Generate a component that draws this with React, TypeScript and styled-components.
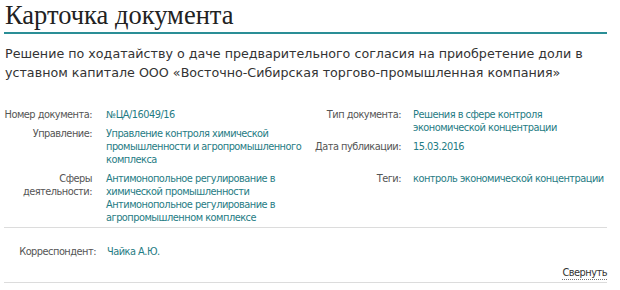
import React from "react";
import styled, { createGlobalStyle } from "styled-components";

const GlobalStyle = createGlobalStyle`
  html, body { margin: 0; padding: 0; background: #ffffff; }
  body { font-family: "DejaVu Sans", sans-serif; }
`;

const Card = styled.div`
  width: 603px;
  margin: 0 0 0 4px;
  display: flex;
  flex-direction: column;
`;

const Title = styled.h1`
  margin: 0;
  padding: 1px 0 3px 1px;
  font-family: "Liberation Serif", "Times New Roman", serif;
  font-weight: normal;
  font-size: 26.5px;
  line-height: 28px;
  color: #222222;
  border-bottom: 2px solid #2a8e96;
`;

const Subtitle = styled.p`
  margin: 10px 0 0 1px;
  font-family: "DejaVu Sans", sans-serif;
  font-size: 12.7px;
  line-height: 19px;
  color: #333333;
`;

const Fields = styled.div`
  margin-top: 26px;
  display: grid;
  grid-template-columns: 306px 1fr;
  row-gap: 6px;
`;

const Column = styled.div`
  display: flex;
  flex-direction: column;
  gap: 6px;
`;

const Field = styled.div<{ $label: number; $gap: number }>`
  display: grid;
  grid-template-columns: ${(p) => p.$label}px 1fr;
  column-gap: ${(p) => p.$gap}px;
  font-family: "DejaVu Sans", sans-serif;
  font-size: 9.8px;
  letter-spacing: -0.5px;
  line-height: 13px;
`;

const Label = styled.div`
  text-align: right;
  white-space: nowrap;
  color: #555555;
`;

const Value = styled.div<{ $width?: number }>`
  color: #1f7c84;
  ${(p) => (p.$width ? `max-width: ${p.$width}px;` : "")}
`;

const Correspondent = styled.div`
  margin-top: 3px;
  border-top: 1px solid #dcdcdc;
  padding-top: 17px;
`;

const Footer = styled.div`
  margin-top: 9px;
  padding-bottom: 2px;
  border-bottom: 1px solid #dcdcdc;
  display: flex;
  justify-content: flex-end;
`;

const Collapse = styled.span`
  font-family: "DejaVu Sans", sans-serif;
  font-size: 9.8px;
  letter-spacing: -0.5px;
  line-height: 12px;
  color: #333333;
  border-bottom: 1px dotted #777777;
  cursor: pointer;
`;

export default function App() {
  return (
    <>
      <GlobalStyle />
      <Card>
        <Title>Карточка документа</Title>
        <Subtitle>
          Решение по ходатайству о даче предварительного согласия на приобретение доли в
          уставном капитале ООО «Восточно-Сибирская торгово-промышленная компания»
        </Subtitle>
        <Fields>
          <Column>
            <Field $label={88} $gap={14}>
              <Label>Номер документа:</Label>
              <Value $width={200}>№ЦА/16049/16</Value>
            </Field>
            <Field $label={88} $gap={14}>
              <Label>Управление:</Label>
              <Value $width={200}>
                Управление контроля химической промышленности и агропромышленного комплекса
              </Value>
            </Field>
          </Column>
          <Column>
            <Field $label={91} $gap={12}>
              <Label>Тип документа:</Label>
              <Value>Решения в сфере контроля экономической концентрации</Value>
            </Field>
            <Field $label={91} $gap={12}>
              <Label>Дата публикации:</Label>
              <Value>15.03.2016</Value>
            </Field>
          </Column>
          <Column>
            <Field $label={88} $gap={14}>
              <Label>
                Сферы
                <br />
                деятельности:
              </Label>
              <Value $width={200}>
                Антимонопольное регулирование в химической промышленности
                <br />
                Антимонопольное регулирование в агропромышленном комплексе
              </Value>
            </Field>
          </Column>
          <Column>
            <Field $label={91} $gap={12}>
              <Label>Теги:</Label>
              <Value>контроль экономической концентрации</Value>
            </Field>
          </Column>
        </Fields>
        <Correspondent>
          <Field $label={92} $gap={11}>
            <Label>Корреспондент:</Label>
            <Value>Чайка А.Ю.</Value>
          </Field>
        </Correspondent>
        <Footer>
          <Collapse>Свернуть</Collapse>
        </Footer>
      </Card>
    </>
  );
}
